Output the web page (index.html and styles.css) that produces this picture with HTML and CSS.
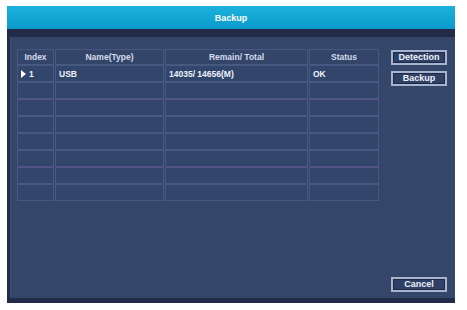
FILE: index.html
```html
<!DOCTYPE html>
<html>
<head>
<meta charset="utf-8">
<link rel="stylesheet" href="styles.css">
</head>
<body>
<div class="dialog">
  <div class="titlebar">Backup</div>
  <div class="frame">
    <div class="panel">
      <table class="grid">
        <colgroup>
          <col class="c-index"><col class="c-name"><col class="c-remain"><col class="c-status">
        </colgroup>
        <thead>
          <tr><th>Index</th><th>Name(Type)</th><th>Remain/ Total</th><th>Status</th></tr>
        </thead>
        <tbody>
          <tr>
            <td class="idx"><svg class="tri" width="5" height="8" viewBox="0 0 5 8"><path d="M0 0 L5 4 L0 8 Z" fill="#ffffff"/></svg>1</td>
            <td>USB</td><td>14035/ 14656(M)</td><td>OK</td>
          </tr>
          <tr><td></td><td></td><td></td><td></td></tr>
          <tr class="hl"><td></td><td></td><td></td><td></td></tr>
          <tr><td></td><td></td><td></td><td></td></tr>
          <tr><td></td><td></td><td></td><td></td></tr>
          <tr><td></td><td></td><td></td><td></td></tr>
          <tr class="hl"><td></td><td></td><td></td><td></td></tr>
          <tr><td></td><td></td><td></td><td></td></tr>
        </tbody>
      </table>
      <div class="side">
        <button class="btn">Detection</button>
        <button class="btn">Backup</button>
        <button class="btn cancel">Cancel</button>
      </div>
    </div>
  </div>
</div>
</body>
</html>
```
FILE: styles.css
```css
html, body {
  margin: 0;
  padding: 0;
  background: #ffffff;
  font-family: "Liberation Sans", Arial, sans-serif;
}

.dialog {
  margin: 6px 0 0 7px;
  width: 448px;
  height: 297px;
  display: flex;
  flex-direction: column;
}

.titlebar {
  height: 23px;
  background: linear-gradient(#1cb2dc, #0c9acb);
  color: #ffffff;
  font-weight: bold;
  font-size: 9px;
  display: flex;
  align-items: center;
  justify-content: center;
}

.frame {
  flex: 1;
  background: #222c48;
  padding: 8px 3px 5px 3px;
  display: flex;
}

.panel {
  flex: 1;
  background: #34476b;
  border-left: 1px solid #3c4f75;
  padding: 12px 8px 6px 6px;
  display: flex;
  gap: 11px;
}

.grid {
  border-collapse: separate;
  border-spacing: 1px 0;
  width: 362px;
  height: 152px;
  margin-left: -1px;
  table-layout: fixed;
  align-self: flex-start;
}

.c-index { width: 37px; }
.c-name { width: 109px; }
.c-remain { width: 143px; }
.c-status { width: 70px; }

.grid th, .grid td {
  border: 1px solid #475980;
  padding: 0 3px;
  font-size: 8.5px;
  font-weight: bold;
  white-space: nowrap;
  overflow: hidden;
}

.grid th {
  height: 14px;
  color: #d3dbeb;
  text-align: center;
  background: #33466a;
}

.grid td {
  height: 15px;
  color: #eef2fa;
  text-align: left;
  background: #32456a;
}

.grid tr.hl td {
  border-top-color: #5d4f8a;
}

.idx {
  padding-left: 3px;
}

.tri {
  vertical-align: -1px;
  margin-right: 3px;
}

.side {
  width: 56px;
  padding-top: 1px;
  display: flex;
  flex-direction: column;
  gap: 6px;
}

.btn {
  width: 56px;
  height: 15px;
  padding: 0;
  border: 2px solid #a7b4cf;
  box-shadow: inset 0 0 0 1px #1f2944;
  background: #2e4065;
  color: #eef2fa;
  font-family: "Liberation Sans", Arial, sans-serif;
  font-weight: bold;
  font-size: 9px;
  line-height: 11px;
}

.btn.cancel {
  margin-top: auto;
}
```
